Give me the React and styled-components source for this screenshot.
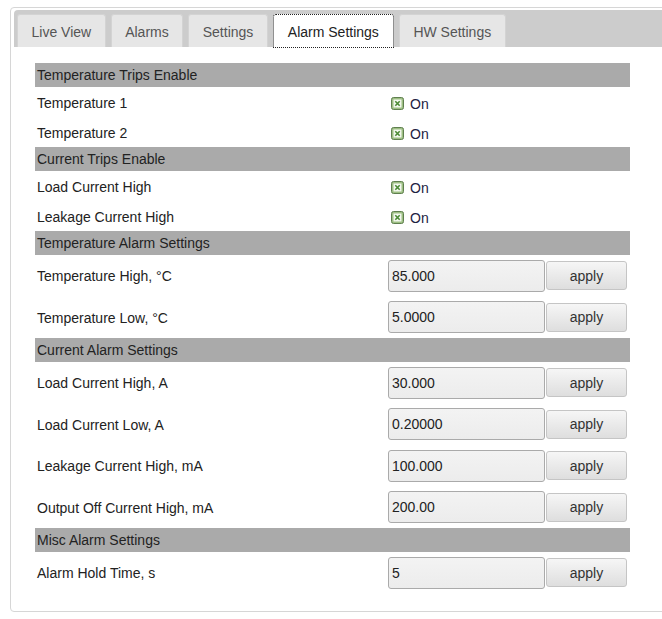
import React from 'react';
import styled, { createGlobalStyle } from 'styled-components';

const GlobalStyle = createGlobalStyle`
  html, body {
    margin: 0;
    padding: 0;
    overflow: hidden;
    background: #fff;
  }
  body {
    font-family: "Liberation Sans", Arial, sans-serif;
    font-size: 14px;
    color: #222;
  }
`;

const Panel = styled.div`
  margin: 7px 0 0 10px;
  width: 680px;
  border: 1px solid #d6d6d6;
  border-radius: 4px;
  padding: 2px 3px 0 3px;
  box-sizing: border-box;
  height: 605px;
`;

const TabBar = styled.div`
  display: flex;
  gap: 5px;
  background: #cccccc;
  border-radius: 4px 0 0 0;
  padding: 4px 0 0 3px;
  height: 33px;
`;

const Tab = styled.div`
  height: ${(p) => (p.$active ? '34px' : '33px')};
  box-sizing: border-box;
  padding: 2px ${(p) => (p.$active ? '14px' : '13.5px')} 0;
  display: flex;
  align-items: center;
  background: ${(p) => (p.$active ? '#fff' : '#e6e6e6')};
  color: ${(p) => (p.$active ? '#222' : '#555')};
  border: ${(p) => (p.$active ? '1px dotted #222' : '1px solid #d3d3d3')};
  border-bottom: ${(p) => (p.$active ? '1px dotted #222' : 'none')};
  border-radius: 3px 3px 0 0;
  font-size: 14px;
  white-space: nowrap;
`;

const Content = styled.div`
  padding: 16px 0 0 21px;
  width: 595px;
`;

const SectionHeader = styled.div`
  background: #aaaaaa;
  height: 24px;
  display: flex;
  align-items: center;
  padding-left: 2px;
  color: #222;
`;

const Row = styled.div`
  display: grid;
  grid-template-columns: 353px 1fr;
  align-items: center;
  height: ${(p) => (p.$tall ? '41.5px' : '30px')};
`;

const Label = styled.span`
  padding-left: 2px;
  padding-top: 1px;
`;

const CheckCell = styled.label`
  display: flex;
  align-items: center;
  gap: 6px;
  padding-left: 3px;
  padding-top: 3px;
  color: #1d2242;
`;

const ValueCell = styled.div`
  display: flex;
  align-items: center;
  gap: 1px;
`;

const ValueInput = styled.input`
  width: 157px;
  height: 32px;
  box-sizing: border-box;
  border: 1px solid #aaa;
  border-radius: 3px;
  background: linear-gradient(#f3f3f3, #ececec);
  padding: 0 3px;
  font-family: "Liberation Sans", Arial, sans-serif;
  font-size: 14px;
  color: #222;
  outline: none;
`;

const ApplyButton = styled.button`
  width: 81px;
  height: 29px;
  box-sizing: border-box;
  border: 1px solid #c5c5c5;
  border-radius: 3px;
  background: linear-gradient(#f6f6f6, #dedede);
  font-family: "Liberation Sans", Arial, sans-serif;
  font-size: 14px;
  color: #333;
  padding: 0;
`;

const CheckIcon = () => (
  <svg width="13" height="13" viewBox="0 0 13 13">
    <rect x="0.5" y="0.5" width="12" height="12" rx="2" fill="#9dbf83" stroke="#5f7f4f" />
    <rect x="2.5" y="2.5" width="8" height="8" fill="#f4f8f0" />
    <path d="M4.3 4.3 L8.7 8.7 M8.7 4.3 L4.3 8.7" stroke="#4a8a34" strokeWidth="1.6" />
  </svg>
);

const tabs = ['Live View', 'Alarms', 'Settings', 'Alarm Settings', 'HW Settings'];

const sections = [
  { title: 'Temperature Trips Enable', kind: 'check', rows: ['Temperature 1', 'Temperature 2'] },
  { title: 'Current Trips Enable', kind: 'check', rows: ['Load Current High', 'Leakage Current High'] },
  {
    title: 'Temperature Alarm Settings',
    kind: 'value',
    rows: [
      ['Temperature High, °C', '85.000'],
      ['Temperature Low, °C', '5.0000'],
    ],
  },
  {
    title: 'Current Alarm Settings',
    kind: 'value',
    rows: [
      ['Load Current High, A', '30.000'],
      ['Load Current Low, A', '0.20000'],
      ['Leakage Current High, mA', '100.000'],
      ['Output Off Current High, mA', '200.00'],
    ],
  },
  { title: 'Misc Alarm Settings', kind: 'value', rows: [['Alarm Hold Time, s', '5']] },
];

const App = () => {
  return (
    <>
      <GlobalStyle />
      <Panel>
        <TabBar>
          {tabs.map((t) => (
            <Tab key={t} $active={t === 'Alarm Settings'}>
              {t}
            </Tab>
          ))}
        </TabBar>
        <Content>
          {sections.map((s) => (
            <div key={s.title}>
              <SectionHeader>{s.title}</SectionHeader>
              {s.kind === 'check'
                ? s.rows.map((r) => (
                    <Row key={r}>
                      <Label>{r}</Label>
                      <CheckCell>
                        <CheckIcon />
                        On
                      </CheckCell>
                    </Row>
                  ))
                : s.rows.map(([label, value]) => (
                    <Row key={label} $tall>
                      <Label>{label}</Label>
                      <ValueCell>
                        <ValueInput defaultValue={value} />
                        <ApplyButton>apply</ApplyButton>
                      </ValueCell>
                    </Row>
                  ))}
            </div>
          ))}
        </Content>
      </Panel>
    </>
  );
};

export default App;
